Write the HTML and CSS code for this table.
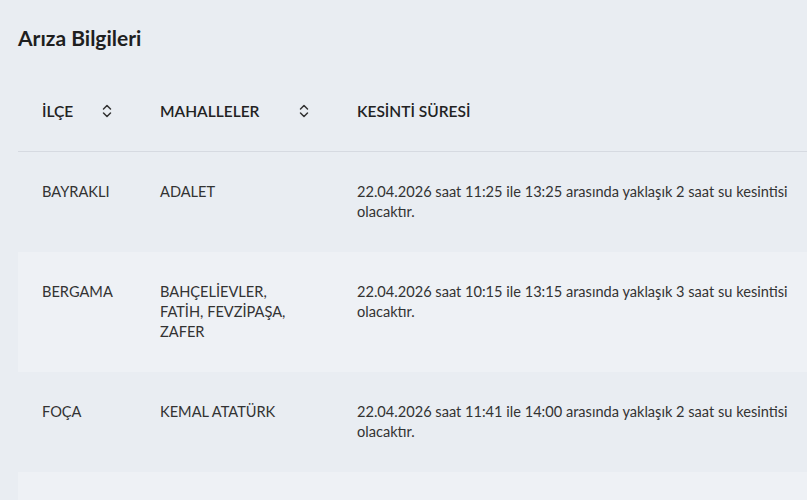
FILE: index.html
```html
<!DOCTYPE html>
<html lang="tr">
<head>
<meta charset="utf-8">
<link rel="stylesheet" href="styles.css">
</head>
<body>
<h1 class="title">Arıza Bilgileri</h1>
<table class="grid">
  <thead>
    <tr>
      <th class="c1"><div class="th-in"><span>İLÇE</span><svg class="sort" viewBox="0 0 10 16" width="10" height="16"><path d="M1.5 6 L5 2.5 L8.5 6 M1.5 10 L5 13.5 L8.5 10" fill="none" stroke="#333" stroke-width="1.5" stroke-linecap="round" stroke-linejoin="round"/></svg></div></th>
      <th class="c2"><div class="th-in"><span>MAHALLELER</span><svg class="sort" viewBox="0 0 10 16" width="10" height="16"><path d="M1.5 6 L5 2.5 L8.5 6 M1.5 10 L5 13.5 L8.5 10" fill="none" stroke="#333" stroke-width="1.5" stroke-linecap="round" stroke-linejoin="round"/></svg></div></th>
      <th class="c3"><div class="th-in"><span>KESİNTİ SÜRESİ</span></div></th>
    </tr>
  </thead>
  <tbody>
    <tr>
      <td>BAYRAKLI</td>
      <td>ADALET</td>
      <td class="desc">22.04.2026 saat 11:25 ile 13:25 arasında yaklaşık 2 saat su kesintisi olacaktır.</td>
    </tr>
    <tr class="alt">
      <td>BERGAMA</td>
      <td>BAHÇELİEVLER,<br>FATİH, FEVZİPAŞA,<br>ZAFER</td>
      <td class="desc">22.04.2026 saat 10:15 ile 13:15 arasında yaklaşık 3 saat su kesintisi olacaktır.</td>
    </tr>
    <tr>
      <td>FOÇA</td>
      <td>KEMAL ATATÜRK</td>
      <td class="desc">22.04.2026 saat 11:41 ile 14:00 arasında yaklaşık 2 saat su kesintisi olacaktır.</td>
    </tr>
    <tr class="alt">
      <td>&nbsp;</td>
      <td>&nbsp;</td>
      <td class="desc">&nbsp;</td>
    </tr>
  </tbody>
</table>
</body>
</html>
```
FILE: styles.css
```css
html, body {
  margin: 0;
  padding: 0;
  background: #e9edf2;
  font-family: "Lato", "Noto Sans", sans-serif;
  color: #333;
  overflow: hidden;
}
.title {
  margin: 0;
  padding: 24px 0 0 18px;
  font-size: 21px;
  line-height: 28px;
  font-weight: 700;
  color: #1f1f1f;
}
.grid {
  margin: 19px 0 0 18px;
  width: calc(100% - 18px);
  border-collapse: collapse;
  table-layout: fixed;
}
.c1 { width: 118px; }
.c2 { width: 197px; }
th {
  padding: 30px 0;
  text-align: left;
  font-size: 15.5px;
  font-weight: 600;
  line-height: 20px;
  color: #222;
  border-bottom: 1px solid #d6dae1;
}
.th-in {
  display: flex;
  align-items: center;
  justify-content: space-between;
  padding: 0 24px;
}
.sort { display: block; }
td {
  padding: 30px 24px;
  vertical-align: top;
  font-size: 14.6px;
  line-height: 20px;
  color: #333;
}
td.desc { padding-right: 0; }
.alt td { background: #eef1f5; }
```
